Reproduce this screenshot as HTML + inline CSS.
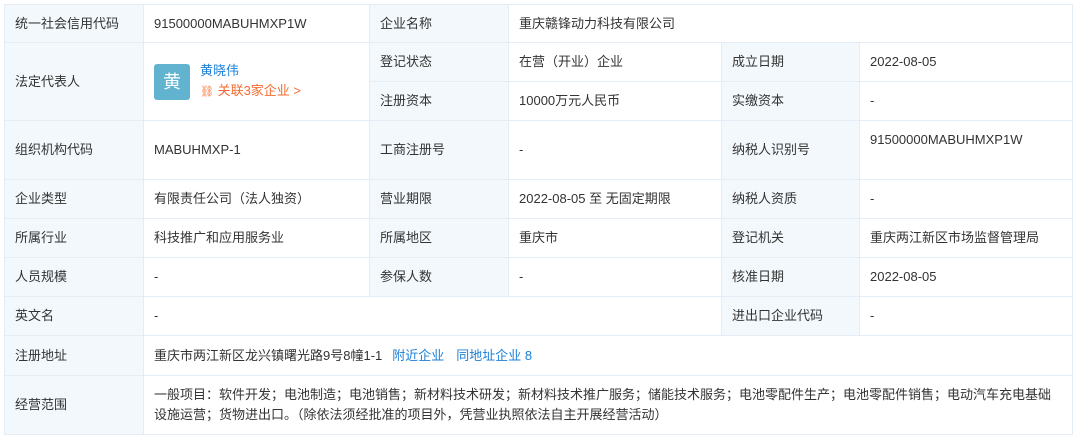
<!DOCTYPE html>
<html><head><meta charset="utf-8"><style>
body{margin:0;width:1079px;height:438px;background:#fff;font-family:"Liberation Sans","Noto Sans CJK SC",sans-serif;font-size:13px;color:#333;position:relative;overflow:hidden}
.c{position:absolute;box-sizing:border-box;border-right:1px solid #e4edf6;border-bottom:1px solid #e4edf6;display:flex;align-items:center;padding-left:10px;line-height:20px}
.h{background:#f2f8fc}
.wrap{position:absolute;left:4px;top:4px;width:1069px;height:431px;border-left:1px solid #e4edf6;border-top:1px solid #e4edf6;box-sizing:border-box}
a{color:#1a7fd8;text-decoration:none}
</style></head><body>
<div class="wrap"></div>
<div class="c h" style="left:4px;top:4px;width:140px;height:39px;border-left:1px solid #e4edf6;border-top:1px solid #e4edf6">统一社会信用代码</div>
<div class="c" style="left:144px;top:4px;width:226px;height:39px;border-top:1px solid #e4edf6">91500000MABUHMXP1W</div>
<div class="c h" style="left:370px;top:4px;width:139px;height:39px;border-top:1px solid #e4edf6">企业名称</div>
<div class="c" style="left:509px;top:4px;width:564px;height:39px;border-top:1px solid #e4edf6">重庆赣锋动力科技有限公司</div>
<div class="c h" style="left:4px;top:43px;width:140px;height:78px;border-left:1px solid #e4edf6">法定代表人</div>
<div class="c" style="left:144px;top:43px;width:226px;height:78px">
<div style="width:36px;height:36px;background:#62b3cf;border-radius:3px;color:#fff;font-size:18px;display:flex;align-items:center;justify-content:center">黄</div>
<div style="margin-left:10px;line-height:20px"><div style="color:#1a7fd8">黄晓伟</div><div style="color:#f56b31"><span style="font-size:11px">⛓</span> 关联3家企业 &gt;</div></div>
</div>
<div class="c h" style="left:370px;top:43px;width:139px;height:39px">登记状态</div>
<div class="c" style="left:509px;top:43px;width:213px;height:39px">在营（开业）企业</div>
<div class="c h" style="left:722px;top:43px;width:138px;height:39px">成立日期</div>
<div class="c" style="left:860px;top:43px;width:213px;height:39px">2022-08-05</div>
<div class="c h" style="left:370px;top:82px;width:139px;height:39px">注册资本</div>
<div class="c" style="left:509px;top:82px;width:213px;height:39px">10000万元人民币</div>
<div class="c h" style="left:722px;top:82px;width:138px;height:39px">实缴资本</div>
<div class="c" style="left:860px;top:82px;width:213px;height:39px">-</div>
<div class="c h" style="left:4px;top:121px;width:140px;height:59px;border-left:1px solid #e4edf6">组织机构代码</div>
<div class="c" style="left:144px;top:121px;width:226px;height:59px">MABUHMXP-1</div>
<div class="c h" style="left:370px;top:121px;width:139px;height:59px">工商注册号</div>
<div class="c" style="left:509px;top:121px;width:213px;height:59px">-</div>
<div class="c h" style="left:722px;top:121px;width:138px;height:59px">纳税人识别号</div>
<div class="c" style="left:860px;top:121px;width:213px;height:59px;align-items:flex-start;padding-top:9px">91500000MABUHMXP1W</div>
<div class="c h" style="left:4px;top:180px;width:140px;height:39px;border-left:1px solid #e4edf6">企业类型</div>
<div class="c" style="left:144px;top:180px;width:226px;height:39px">有限责任公司（法人独资）</div>
<div class="c h" style="left:370px;top:180px;width:139px;height:39px">营业期限</div>
<div class="c" style="left:509px;top:180px;width:213px;height:39px">2022-08-05 至 无固定期限</div>
<div class="c h" style="left:722px;top:180px;width:138px;height:39px">纳税人资质</div>
<div class="c" style="left:860px;top:180px;width:213px;height:39px">-</div>
<div class="c h" style="left:4px;top:219px;width:140px;height:39px;border-left:1px solid #e4edf6">所属行业</div>
<div class="c" style="left:144px;top:219px;width:226px;height:39px">科技推广和应用服务业</div>
<div class="c h" style="left:370px;top:219px;width:139px;height:39px">所属地区</div>
<div class="c" style="left:509px;top:219px;width:213px;height:39px">重庆市</div>
<div class="c h" style="left:722px;top:219px;width:138px;height:39px">登记机关</div>
<div class="c" style="left:860px;top:219px;width:213px;height:39px">重庆两江新区市场监督管理局</div>
<div class="c h" style="left:4px;top:258px;width:140px;height:39px;border-left:1px solid #e4edf6">人员规模</div>
<div class="c" style="left:144px;top:258px;width:226px;height:39px">-</div>
<div class="c h" style="left:370px;top:258px;width:139px;height:39px">参保人数</div>
<div class="c" style="left:509px;top:258px;width:213px;height:39px">-</div>
<div class="c h" style="left:722px;top:258px;width:138px;height:39px">核准日期</div>
<div class="c" style="left:860px;top:258px;width:213px;height:39px">2022-08-05</div>
<div class="c h" style="left:4px;top:297px;width:140px;height:39px;border-left:1px solid #e4edf6">英文名</div>
<div class="c" style="left:144px;top:297px;width:578px;height:39px">-</div>
<div class="c h" style="left:722px;top:297px;width:138px;height:39px">进出口企业代码</div>
<div class="c" style="left:860px;top:297px;width:213px;height:39px">-</div>
<div class="c h" style="left:4px;top:336px;width:140px;height:40px;border-left:1px solid #e4edf6">注册地址</div>
<div class="c" style="left:144px;top:336px;width:929px;height:40px">重庆市两江新区龙兴镇曙光路9号8幢1-1<a style="margin-left:10px">附近企业</a><a style="margin-left:12px">同地址企业 8</a></div>
<div class="c h" style="left:4px;top:376px;width:140px;height:59px;border-left:1px solid #e4edf6">经营范围</div>
<div class="c" style="left:144px;top:376px;width:929px;height:59px;padding-right:11px">一般项目：软件开发；电池制造；电池销售；新材料技术研发；新材料技术推广服务；储能技术服务；电池零配件生产；电池零配件销售；电动汽车充电基础设施运营；货物进出口。（除依法须经批准的项目外，凭营业执照依法自主开展经营活动）</div>
</body></html>
